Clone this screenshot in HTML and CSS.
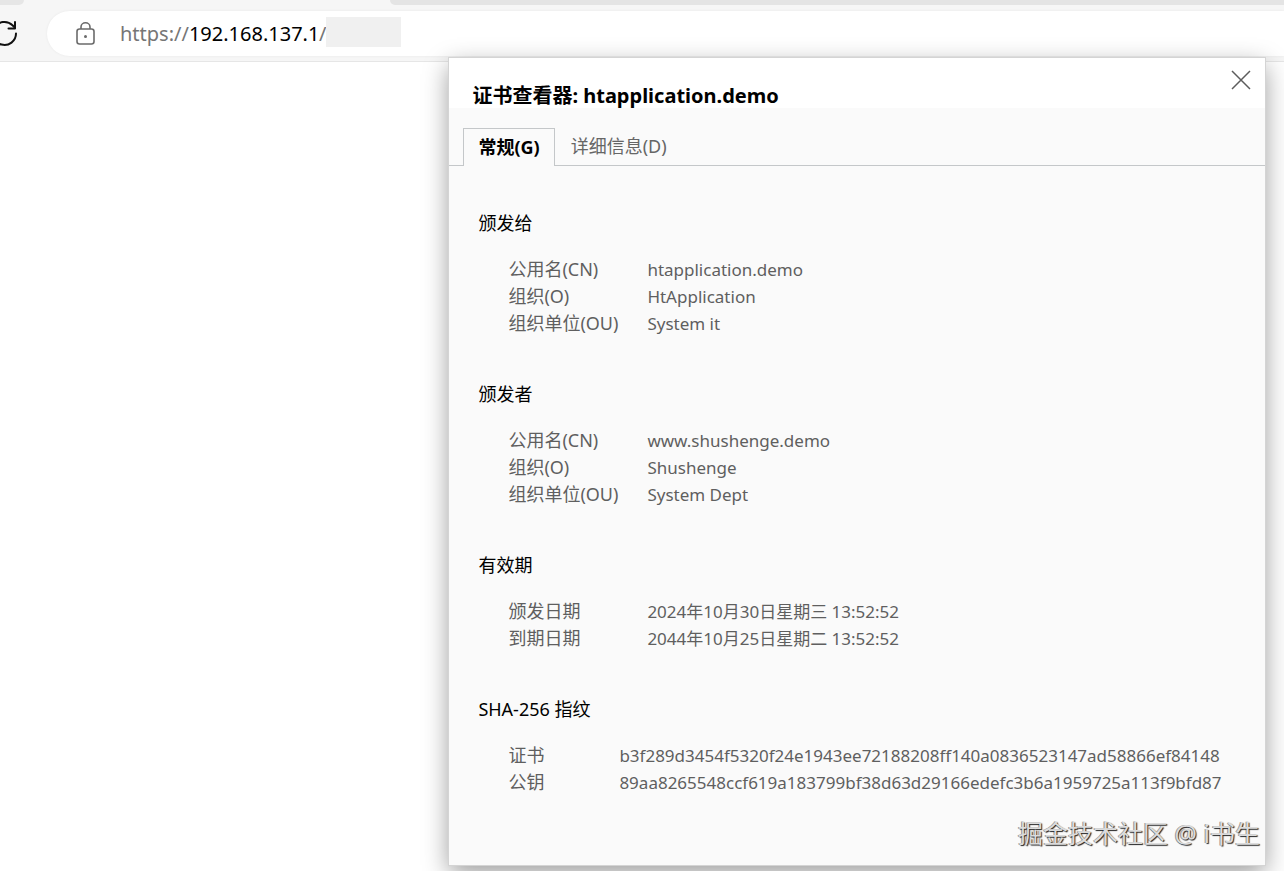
FILE: index.html
```html
<!DOCTYPE html>
<html lang="zh-CN">
<head>
    <meta charset="UTF-8">
    <meta name="viewport" content="width=device-width, initial-scale=1.0">
    <title>证书查看器</title>
    <link rel="stylesheet" href="styles.css">
</head>
<body>
    <header class="browser">
        <div class="tab-strip">
            <div class="tab-side"></div>
            <div class="tab-current"></div>
            <div class="tab-rest"></div>
        </div>
        <div class="toolbar">
            <button class="icon-button reload" aria-label="刷新">
                <svg width="26" height="30" viewBox="0 0 26 30" fill="none" stroke="#111" stroke-width="2" stroke-linecap="round" stroke-linejoin="round">
                    <path d="M24 14.500a11.500 11.500 0 1 1-3.500-8.300l2.500 2.500"/>
                    <path d="M23 3v6.500h-6.500"/>
                </svg>
            </button>
            <div class="address-bar">
                <svg class="lock" width="20" height="24" viewBox="0 0 20 24" fill="none" stroke="#6b6b6b" stroke-width="1.600">
                    <rect x="1" y="7" width="17" height="15" rx="2.500"/>
                    <path d="M5 7V5a4.500 4.200 0 0 1 9 0v2"/>
                    <circle cx="9.500" cy="14.500" r="1.500" fill="#6b6b6b" stroke="none"/>
                </svg>
                <label class="scheme" for="url">https://</label>
                <input class="url" id="url" type="text" value="192.168.137.1">
                <span class="scheme">/</span>
                <span class="hidden-path"></span>
            </div>
        </div>
    </header>

    <main class="dialog" role="dialog" aria-labelledby="dialog-title">
        <div class="dialog-header">
            <h1 id="dialog-title">证书查看器: htapplication.demo</h1>
            <button class="icon-button close" aria-label="关闭">
                <svg width="20" height="20" viewBox="0 0 20 20" stroke="#5c5c5c" stroke-width="1.500">
                    <path d="M1 1l18 18M19 1L1 19"/>
                </svg>
            </button>
        </div>

        <div class="tabs" role="tablist">
            <button class="tab active" role="tab" aria-selected="true">常规(G)</button>
            <button class="tab" role="tab" aria-selected="false">详细信息(D)</button>
        </div>

        <div class="details">
            <section>
                <h2>颁发给</h2>
                <dl>
                    <dt>公用名(CN)</dt>
                    <dd>htapplication.demo</dd>
                    <dt>组织(O)</dt>
                    <dd>HtApplication</dd>
                    <dt>组织单位(OU)</dt>
                    <dd>System it</dd>
                </dl>
            </section>
            <section>
                <h2>颁发者</h2>
                <dl>
                    <dt>公用名(CN)</dt>
                    <dd>www.shushenge.demo</dd>
                    <dt>组织(O)</dt>
                    <dd>Shushenge</dd>
                    <dt>组织单位(OU)</dt>
                    <dd>System Dept</dd>
                </dl>
            </section>
            <section>
                <h2>有效期</h2>
                <dl>
                    <dt>颁发日期</dt>
                    <dd>2024年10月30日星期三 13:52:52</dd>
                    <dt>到期日期</dt>
                    <dd>2044年10月25日星期二 13:52:52</dd>
                </dl>
            </section>
            <section>
                <h2>SHA-256 指纹</h2>
                <dl class="fingerprints">
                    <dt>证书</dt>
                    <dd>b3f289d3454f5320f24e1943ee72188208ff140a0836523147ad58866ef84148</dd>
                    <dt>公钥</dt>
                    <dd>89aa8265548ccf619a183799bf38d63d29166edefc3b6a1959725a113f9bfd87</dd>
                </dl>
            </section>
        </div>
        <p class="watermark">掘金技术社区 @ i书生</p>
    </main>
</body>
</html>
```
FILE: styles.css
```css
* {
    box-sizing: border-box;
}
body {
    margin: 0;
    min-height: 100vh;
    overflow-x: hidden;
    background-color: #fff;
    color: #000;
    font-family: "Noto Sans", "Noto Sans CJK SC", sans-serif;
    font-size: 18px;
    line-height: 27px;
}
h1, h2, dl, dd, p {
    margin: 0;
}
button, input {
    font: inherit;
    color: inherit;
    background: none;
    border: none;
    padding: 0;
}
.icon-button {
    display: flex;
    cursor: pointer;
}

/* browser chrome */
.browser {
    background-color: #f6f6f6;
    border-bottom: 1px solid #e6e6e6;
}
.tab-strip {
    display: flex;
    height: 5px;
    background-color: #f6f6f6;
}
.tab-side {
    width: 24px;
    background-color: #e6e6e6;
    border-bottom-right-radius: 5px;
}
.tab-current {
    width: 366px;
}
.tab-rest {
    flex: 1;
    background-color: #e4e4e4;
    border-bottom-left-radius: 5px;
}
.toolbar {
    display: flex;
    align-items: center;
    padding: 6px 0 5px;
}
.reload {
    width: 47px;
    margin-left: -8px;
    margin-right: 8px;
}
.address-bar {
    display: flex;
    align-items: center;
    flex: 1;
    height: 45px;
    padding-left: 29px;
    background-color: #fff;
    border-radius: 23px 0 0 23px;
    box-shadow: 0 0 3px rgba(0, 0, 0, 0.06);
    font-size: 20px;
}
.lock {
    margin-right: 24px;
}
.scheme {
    color: #767676;
}
.url {
    width: 130px;
}
.hidden-path {
    width: 75px;
    height: 30px;
    margin-bottom: 3px;
    background-color: #f0f0f0;
}

/* certificate dialog */
.dialog {
    position: absolute;
    top: 58px;
    left: 35%;
    right: 19px;
    background-color: #fafafa;
    outline: 1px solid #d4d4d4;
    box-shadow: 0 8px 24px rgba(0, 0, 0, 0.4);
}
.dialog-header {
    display: flex;
    justify-content: space-between;
    height: 50px;
    padding: 12px 14px 0 23px;
    background-color: #fff;
}
.dialog-header h1 {
    padding-top: 12px;
    font-size: 20px;
    font-weight: 700;
}
.tabs {
    display: flex;
    padding: 20px 14px 0;
    border-bottom: 1px solid #c4c7c9;
}
.tab {
    height: 37px;
    padding: 0 16px;
    color: #666;
    cursor: pointer;
}
.tab.active {
    height: 38px;
    margin-bottom: -1px;
    padding: 0 14px;
    border: 1px solid #c4c7c9;
    border-bottom: none;
    background-color: #fafafa;
    color: #000;
    font-weight: 700;
}
.details {
    display: flex;
    flex-direction: column;
    gap: 44px;
    padding: 44px 29px 21px;
}
.details h2 {
    margin-bottom: 19px;
    font-size: 18px;
    font-weight: 400;
}
.details dl {
    display: grid;
    grid-template-columns: 139px 1fr;
    padding-left: 30px;
    color: #5f5f5f;
}
.details .fingerprints {
    grid-template-columns: 111px 1fr;
}
.details dd {
    font-size: 17px;
}
.watermark {
    padding: 0 5px 16px;
    color: #dcdcdc;
    font-size: 25px;
    line-height: 32px;
    text-align: right;
    text-shadow: 1px 1px 1px #222, -1px 0 0 #999;
}
```
